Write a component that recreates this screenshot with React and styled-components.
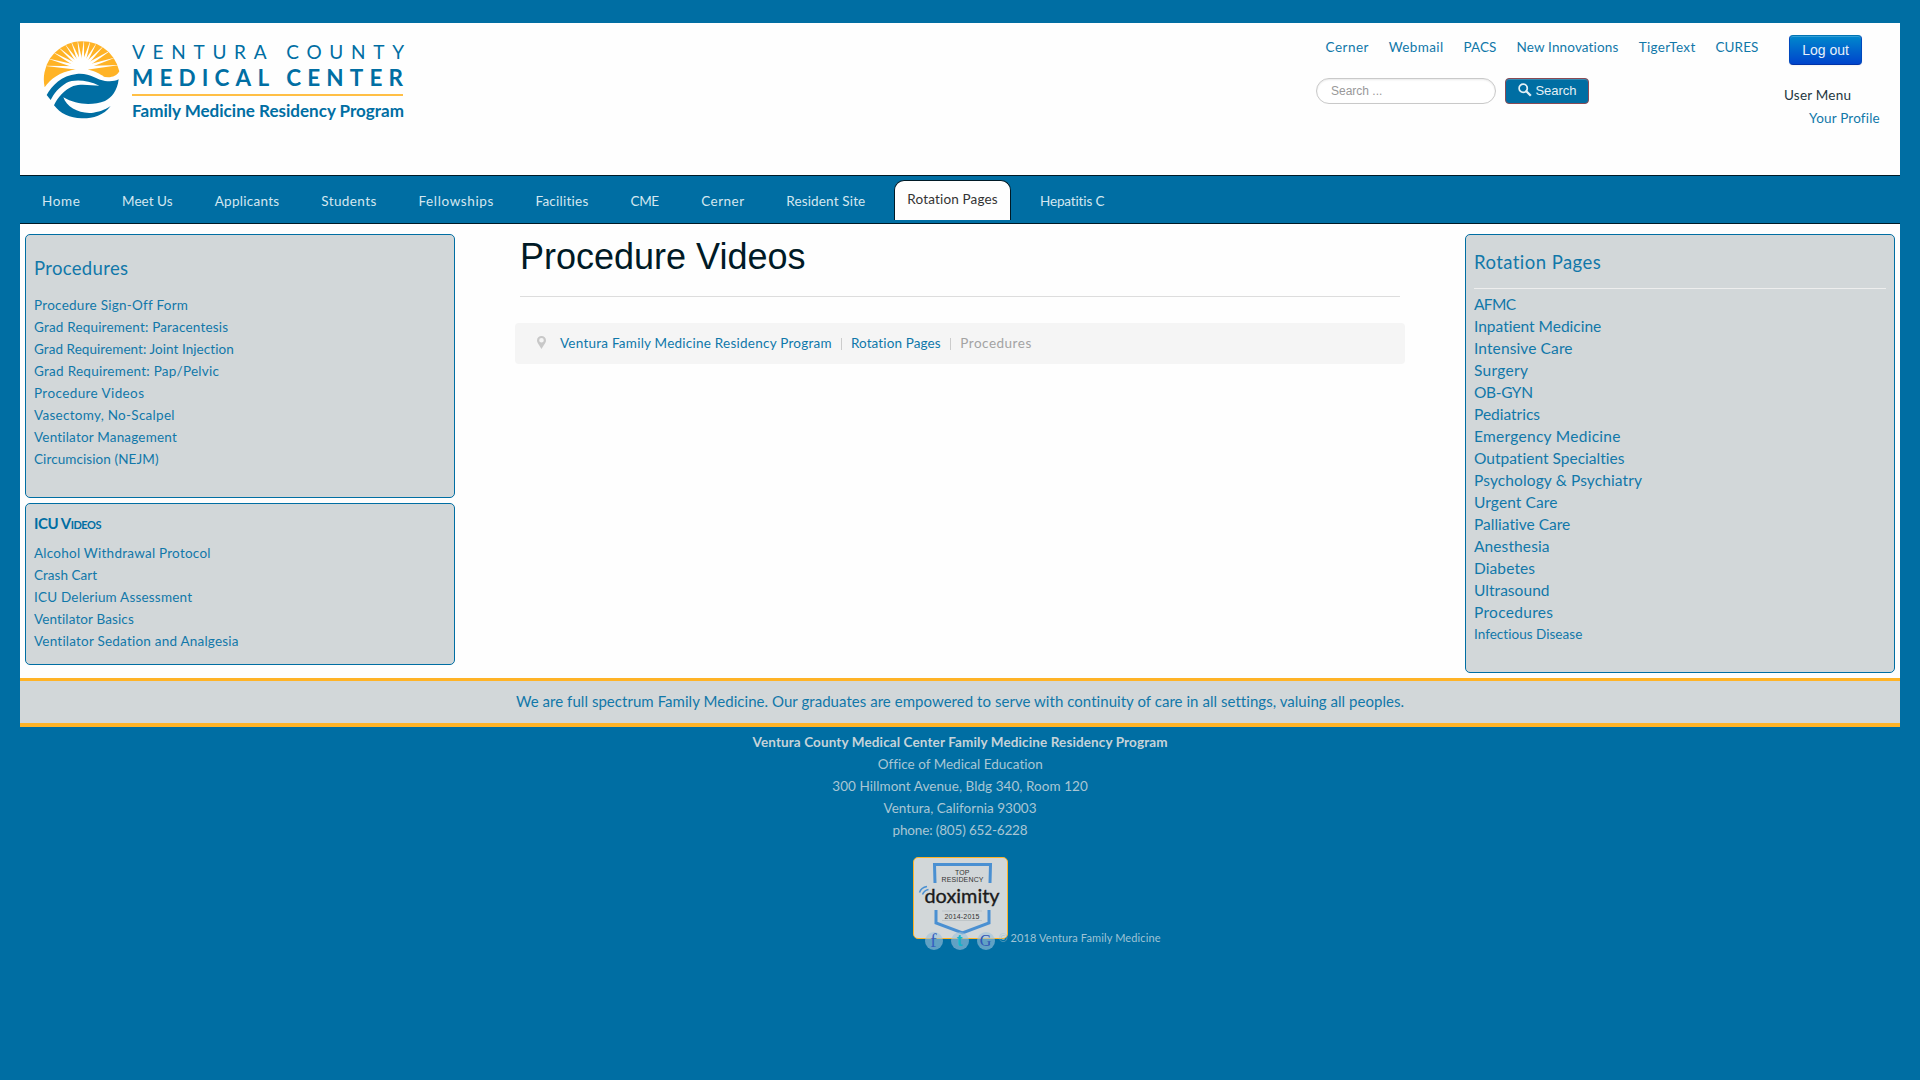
import React, { useLayoutEffect, useRef, useState } from "react";
import styled, { createGlobalStyle } from "styled-components";

const BLUE = "#006ea3";
const LINK = "#1178a9";
const GOLD = "#ffb326";
const GREY = "#d2d7d9";
const SANS = `"Liberation Sans", Arial, sans-serif`;

const GlobalStyle = createGlobalStyle`
  * { box-sizing: border-box; }
  html, body { margin: 0; padding: 0; background: ${BLUE}; }
  body {
    height: 1080px;
    overflow: hidden;
    font: 400 13.5px/22px Lato, "Open Sans", sans-serif;
    color: ${LINK};
  }
  h1, h2, h3, p, ul { margin: 0; padding: 0; font-weight: 400; list-style: none; }
  a { color: inherit; text-decoration: none; }
`;

/* Tracks its text out (or in) so that it fills the given measure. */
const Measure = styled.span`
  display: inline-block;
  white-space: nowrap;
  vertical-align: top;
`;

function Fit({ w, children }) {
  const ref = useRef(null);
  const [tracking, setTracking] = useState(0);
  useLayoutEffect(() => {
    const el = ref.current;
    el.style.letterSpacing = "0px";
    el.style.width = "auto";
    const natural = el.getBoundingClientRect().width;
    el.style.width = `${w}px`;
    const value = (w - natural) / Math.max(1, String(children).length - 1);
    el.style.letterSpacing = `${value}px`;
    setTracking(value);
  }, [w, children]);
  return (
    <Measure ref={ref} style={{ width: w, letterSpacing: tracking }}>
      {children}
    </Measure>
  );
}

const Page = styled.div`
  width: 1880px;
  margin: 0 auto;
  padding-top: 23px;
`;

const Header = styled.header`
  display: grid;
  grid-template-columns: 1296px 468px 1fr;
  height: 152px;
  background: #fefefe;
`;

const LogoLink = styled.a`
  display: block;
  padding: 13px 0 0 20px;
  svg { display: block; }
`;

const Tools = styled.div`
  padding-top: 13px;
`;

const TopLinks = styled.nav`
  display: flex;
  gap: 20.2px;
  padding-left: 9.5px;
`;

const SearchForm = styled.form`
  display: flex;
  gap: 9px;
  margin-top: 20px;
`;

const SearchInput = styled.input`
  width: 180px;
  height: 26px;
  padding: 0 14px;
  border: 1px solid #c9c9c9;
  border-radius: 15px;
  background: #fff;
  box-shadow: inset 0 1px 2px rgba(0, 0, 0, 0.09);
  font: 12px/18px ${SANS};
  &::placeholder { color: #999; opacity: 1; }
`;

const SearchButton = styled.button`
  display: flex;
  align-items: center;
  justify-content: center;
  gap: 3px;
  width: 84px;
  height: 26px;
  padding: 0 0 1px 1px;
  border: 1px solid #8a4b55;
  border-radius: 4px;
  background: ${BLUE};
  box-shadow: inset 0 1px 0 rgba(255, 255, 255, 0.2);
  color: #e4f0f6;
  font: 13px/18px ${SANS};
  svg { display: block; margin-top: -2px; }
`;

const Account = styled.div`
  padding-top: 12px;
`;

const LogoutButton = styled.button`
  display: block;
  width: 73px;
  height: 30px;
  margin-left: 5px;
  padding: 0 0 1px;
  border: 1px solid;
  border-color: #0074b4 #0048bd #0033a8;
  border-radius: 4px;
  background: linear-gradient(#0088cc, #0044cc);
  box-shadow: inset 0 1px 0 rgba(255, 255, 255, 0.2), 0 1px 2px rgba(0, 0, 0, 0.05);
  color: #e8f1fa;
  font: 14px/20px ${SANS};
`;

const MenuTitle = styled.h3`
  margin-top: 19px;
  color: #1d3640;
  font-size: 13.5px;
`;

const MenuItem = styled.div`
  margin-top: 1px;
  padding-left: 25px;
`;

const NavBar = styled.nav`
  display: flex;
  gap: 42.1px;
  height: 49px;
  padding-left: 22px;
  border: solid #001a26;
  border-width: 1px 0;
  background: ${BLUE};
  color: #d4e7f0;
`;

const NavItem = styled.a`
  padding-top: 14px;
`;

const ActiveTab = styled(NavItem)`
  height: 40px;
  margin: 4px -13px 0;
  padding: 7px 12px 0;
  border: 1px solid #001a26;
  border-bottom: 0;
  border-radius: 10px 10px 0 0;
  background: #fefefe;
  color: #333;
`;

const Main = styled.main`
  display: grid;
  grid-template-columns: 430px 890px 430px;
  justify-content: space-between;
  align-items: start;
  height: 454px;
  padding: 10px 5px 0;
  background: #fefefe;
`;

const Sidebar = styled.aside`
  display: flex;
  flex-direction: column;
  gap: 5px;
`;

const Panel = styled.section`
  height: ${(p) => p.$h}px;
  padding: ${(p) => p.$top}px 8px 0;
  border: 1px solid ${BLUE};
  border-radius: 5px;
  background: ${GREY};
`;

const PanelTitle = styled.h3`
  margin-bottom: ${(p) => p.$gap}px;
  color: ${LINK};
  font-size: 18.5px;
  line-height: 22px;
`;

const RuledTitle = styled(PanelTitle)`
  padding-bottom: 15px;
  border-bottom: 1px solid #eee;
`;

const CapsTitle = styled(PanelTitle)`
  color: ${BLUE};
  font-size: 15px;
  font-weight: 700;
  font-variant: small-caps;
`;

const LinkRow = styled.li`
  height: 22px;
  font-size: ${(p) => (p.$large ? 15.5 : 13.5)}px;
`;

const Article = styled.article`
  padding-top: 3px;
`;

const PageTitle = styled.h1`
  height: 60px;
  margin: 0 5px 26px;
  border-bottom: 1px solid #ddd;
  color: #001a26;
  font: 36px/40px ${SANS};
`;

const Breadcrumb = styled.div`
  display: flex;
  align-items: center;
  height: 41px;
  padding: 0 22px 1px;
  border-radius: 4px;
  background: #f5f5f5;
  color: #0f78aa;
  svg { display: block; margin: -2px 14px 0 0; }
`;

const Divider = styled.span`
  width: 1px;
  height: 12px;
  margin: 2px 9.2px 0;
  background: #ccc;
`;

const Current = styled.span`
  color: #a3a3a3;
`;

const Tagline = styled.p`
  height: 49px;
  border-top: 3px solid ${GOLD};
  border-bottom: 4px solid ${GOLD};
  background: ${GREY};
  font-size: 15px;
  line-height: 41px;
  text-align: center;
`;

const Footer = styled.footer`
  padding-top: 4px;
  color: #a9c6d4;
  text-align: center;
`;

const FooterLine = styled.p`
  height: 22px;
  color: ${(p) => (p.$strong ? "#c6d3d9" : "inherit")};
  font-weight: ${(p) => (p.$strong ? 700 : 400)};
`;

const Badge = styled.div`
  width: 95px;
  height: 82px;
  margin: 16px auto 0;
  border: 1px solid ${GOLD};
  border-radius: 5px;
  background: ${GREY};
  svg { display: block; }
`;

const Credits = styled.div`
  position: relative;
  display: flex;
  align-items: center;
  height: 18px;
  margin-top: -7px;
  padding-left: 904.5px;
  font-size: 11px;
`;

const Social = styled.a`
  width: 18px;
  height: 18px;
  margin-right: 8px;
  border-radius: 50%;
  background: rgba(160, 195, 218, 0.6);
  color: ${(p) => p.$color};
  font: ${(p) => p.$weight} ${(p) => p.$size}px/18px ${(p) => p.$font};
  text-align: center;
`;

const Copyright = styled.span`
  display: flex;
  margin-top: -6px;
  margin-left: -4px;
  color: #9fc3d5;
`;

const Mark = styled.span`
  width: 12px;
  text-align: left;
  opacity: 0.7;
`;

const RAYS = [-176, -164, -151, -138, -125, -112, -99, -86, -73, -60, -46, -32, -18, -5];

function Logo() {
  return (
    <svg width="370" height="90" viewBox="0 0 370 90">
      <g transform="scale(0.3333)">
        <path
          fill={GOLD}
          d="M14,154 A113,113 0 0 1 238,106 C228,124 205,128 185,120 C150,104 125,98 100,102 C60,108 32,128 14,154Z"
        />
        <circle cx="126" cy="92" r="21" fill="#fff" />
        {RAYS.map((deg) => (
          <polygon
            key={deg}
            fill="#fff"
            points="14,-5.5 108,-0.5 108,0.5 14,5.5"
            transform={`translate(126 97) rotate(${deg}) scale(${1.03 - 0.28 * Math.abs(Math.sin((deg * Math.PI) / 180))} 1)`}
          />
        ))}
        <path
          fill="#fff"
          d="M60,124 C80,104 100,99 126,98 C150,99 170,108 190,120 L190,136 L60,136Z"
        />
        <path
          fill={BLUE}
          d="M20,177 C35,150 65,118 110,114 C150,110 170,132 195,135 C212,137 224,136 236,130 C232,165 215,185 195,195 C160,208 110,208 70,184 C80,215 120,235 160,230 C185,226 200,218 212,210 C190,240 155,248 125,247 C90,247 60,232 42,208 C52,185 75,160 100,150 C125,142 155,149 178,149 C140,130 100,130 80,140 C55,155 42,172 32,192Z"
        />
      </g>
      <g fill={BLUE} fontFamily='Lato, "Open Sans", sans-serif'>
        <text x="92" y="23" fontSize="19" textLength="272">VENTURA COUNTY</text>
        <text x="92" y="50" fontSize="22.5" fontWeight="700" textLength="271">MEDICAL CENTER</text>
        <text x="92" y="80.5" fontSize="17" fontWeight="700" textLength="272" lengthAdjust="spacingAndGlyphs">
          Family Medicine Residency Program
        </text>
      </g>
      <rect x="92" y="58" width="271" height="2" fill="#ffbf45" />
    </svg>
  );
}

function DoximityMark() {
  return (
    <svg width="93" height="80" viewBox="0 0 93 80">
      <g fill="none" stroke="#4a90d2">
        <path strokeWidth="3" d="M21,25 L20.5,6.5 H76.5 L76,25" />
        <path strokeWidth="3" d="M22,52 V65 L48.5,75 L75,65 V52" />
        <path strokeWidth="1.5" d="M5.5,34.5 Q7,29.5 13,28.5 M8.5,36.5 Q10,32.500 14.5,31.500" />
      </g>
      <path stroke="#aab3b8" strokeWidth="0.8" d="M28,62.500 H68 M28,53 H68" opacity=".6" />
      <g fontFamily='"Liberation Sans", Arial, sans-serif' fill="#333">
        <text x="41" y="17" fontSize="7" textLength="14.500">TOP</text>
        <text x="27.500" y="24.300" fontSize="7" textLength="42">RESIDENCY</text>
        <text x="30.500" y="61.300" fontSize="7" textLength="35">2014-2015</text>
      </g>
      <text x="10.5" y="45" fontSize="20" textLength="75" lengthAdjust="spacingAndGlyphs" fill="#1b1b1b" stroke="#1b1b1b" strokeWidth=".35" fontFamily="Lato, sans-serif">
        doximity
      </text>
    </svg>
  );
}

const topLinks = [["Cerner", 43], ["Webmail", 54.5], ["PACS", 33], ["New Innovations", 102], ["TigerText", 56.5], ["CURES", 43]];
const navLinks = [
  ["Home", 38], ["Meet Us", 50.5], ["Applicants", 64.5], ["Students", 55], ["Fellowships", 75], ["Facilities", 53],
  ["CME", 28.5], ["Cerner", 43], ["Resident Site", 79], ["Rotation Pages", 90.5], ["Hepatitis C", 65],
];
const procedures = [
  ["Procedure Sign-Off Form", 153.5], ["Grad Requirement: Paracentesis", 194], ["Grad Requirement: Joint Injection", 200],
  ["Grad Requirement: Pap/Pelvic", 185], ["Procedure Videos", 110], ["Vasectomy, No-Scalpel", 140.5],
  ["Ventilator Management", 143], ["Circumcision (NEJM)", 124.5],
];
const icuVideos = [
  ["Alcohol Withdrawal Protocol", 176.5], ["Crash Cart", 63], ["ICU Delerium Assessment", 158],
  ["Ventilator Basics", 100], ["Ventilator Sedation and Analgesia", 205],
];
const rotations = [
  ["AFMC", 42], ["Inpatient Medicine", 127.5], ["Intensive Care", 98.5], ["Surgery", 54], ["OB-GYN", 59], ["Pediatrics", 66],
  ["Emergency Medicine", 146.5], ["Outpatient Specialties", 151], ["Psychology & Psychiatry", 168], ["Urgent Care", 83.5],
  ["Palliative Care", 96.5], ["Anesthesia", 75.5], ["Diabetes", 61], ["Ultrasound", 75.5], ["Procedures", 79],
];
const address = [
  ["Ventura County Medical Center Family Medicine Residency Program", 415], ["Office of Medical Education", 164.5],
  ["300 Hillmont Avenue, Bldg 340, Room 120", 255.5], ["Ventura, California 93003", 153], ["phone: (805) 652-6228", 135],
];

function LinkList({ items, large, children }) {
  return (
    <ul>
      {items.map(([text, w]) => (
        <LinkRow key={text} $large={large}>
          <a href="#"><Fit w={w}>{text}</Fit></a>
        </LinkRow>
      ))}
      {children}
    </ul>
  );
}

export default function App() {
  return (
    <>
      <GlobalStyle />
      <Page>
        <Header>
          <LogoLink href="#"><Logo /></LogoLink>
          <Tools>
            <TopLinks>
              {topLinks.map(([text, w]) => <a href="#" key={text}><Fit w={w}>{text}</Fit></a>)}
            </TopLinks>
            <SearchForm>
              <SearchInput placeholder="Search ..." />
              <SearchButton type="button">
                <svg width="14" height="14" viewBox="0 0 14 14" fill="none" stroke="currentColor">
                  <circle cx="5.200" cy="5.200" r="4.100" strokeWidth="1.700" />
                  <path d="M8.300 8.300 L12.800 12.800" strokeWidth="2.300" />
                </svg>
                Search
              </SearchButton>
            </SearchForm>
          </Tools>
          <Account>
            <LogoutButton>Log out</LogoutButton>
            <MenuTitle><Fit w={67}>User Menu</Fit></MenuTitle>
            <MenuItem><a href="#"><Fit w={70.5}>Your Profile</Fit></a></MenuItem>
          </Account>
        </Header>

        <NavBar>
          {navLinks.map(([text, w]) => {
            const Item = text === "Rotation Pages" ? ActiveTab : NavItem;
            return <Item href="#" key={text}><Fit w={w}>{text}</Fit></Item>;
          })}
        </NavBar>

        <Main>
          <Sidebar>
            <Panel $h={264} $top={22}>
              <PanelTitle $gap={15}><Fit w={94}>Procedures</Fit></PanelTitle>
              <LinkList items={procedures} />
            </Panel>
            <Panel $h={162} $top={8}>
              <CapsTitle $gap={8}><Fit w={67.5}>ICU Videos</Fit></CapsTitle>
              <LinkList items={icuVideos} />
            </Panel>
          </Sidebar>

          <Article>
            <PageTitle><Fit w={285.5}>Procedure Videos</Fit></PageTitle>
            <Breadcrumb>
              <svg width="9" height="13" viewBox="0 0 9 13">
                <path fill="#c8c8c8" fillRule="evenodd" d="M4.500 0 C7 0 9 1.800 9 4.400 C9 6.800 6.500 9 4.500 13 C2.500 9 0 6.800 0 4.400 C0 1.800 2 0 4.500 0Z M4.500 2 A2.300 2.300 0 1 0 4.500 6.600 A2.300 2.300 0 1 0 4.500 2Z" />
              </svg>
              <a href="#"><Fit w={271.5}>Ventura Family Medicine Residency Program</Fit></a>
              <Divider />
              <a href="#"><Fit w={90}>Rotation Pages</Fit></a>
              <Divider />
              <Current><Fit w={71}>Procedures</Fit></Current>
            </Breadcrumb>
          </Article>

          <Panel $h={439} $top={16}>
            <RuledTitle $gap={4}><Fit w={127}>Rotation Pages</Fit></RuledTitle>
            <LinkList items={rotations} large>
              <LinkRow><a href="#"><Fit w={108.5}>Infectious Disease</Fit></a></LinkRow>
            </LinkList>
          </Panel>
        </Main>

        <Tagline>
          <Fit w={888}>
            {"We are full spectrum Family Medicine. Our graduates are empowered to serve with continuity of care in all settings, valuing all peoples."}
          </Fit>
        </Tagline>

        <Footer>
          {address.map(([text, w], i) => (
            <FooterLine key={text} $strong={i === 0}><Fit w={w}>{text}</Fit></FooterLine>
          ))}
          <Badge><DoximityMark /></Badge>
          <Credits>
            <Social href="#" $color="#3560c0" $weight={400} $size={19} $font={`"Liberation Serif", serif`}>f</Social>
            <Social href="#" $color="#16b5cc" $weight={700} $size={17} $font={SANS}>t</Social>
            <Social href="#" $color="#2f55b5" $weight={400} $size={16} $font={`"Liberation Serif", serif`}>G</Social>
            <Copyright><Mark>©</Mark><Fit w={150}>2018 Ventura Family Medicine</Fit></Copyright>
          </Credits>
        </Footer>
      </Page>
    </>
  );
}
